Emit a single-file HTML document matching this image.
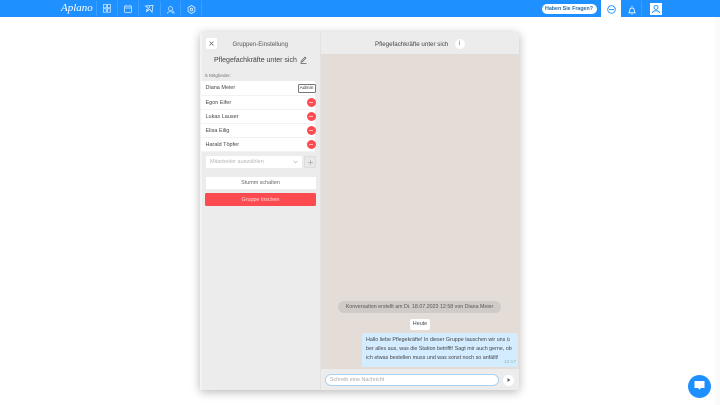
<!DOCTYPE html>
<html><head><meta charset="utf-8"><style>
html,body{margin:0;padding:0;width:720px;height:405px;overflow:hidden;background:#fff;font-family:"Liberation Sans",sans-serif;color:#444}
div{position:absolute;box-sizing:border-box;white-space:nowrap}
svg{position:absolute;overflow:visible}
.sep{top:1px;width:1px;height:15px;background:#3a9fff}
.row{left:201px;width:114px;height:14px;background:#fff;font-size:5.5px;line-height:14.5px;padding-left:4.5px;color:#444;border-bottom:1px solid #f2f2f2}
.minus{left:306.5px;width:9px;height:9px;border-radius:50%;background:#fb4b50}
.minus:after{content:"";position:absolute;left:2.5px;top:4px;width:4px;height:1px;background:#fbb}
</style></head><body>
<div style="left:0;top:0;width:720px;height:17px;background:#1e90ff"></div>
<div style="left:61px;top:1px;color:#fff;font:italic 11px 'Liberation Serif',serif;line-height:15px">Aplano</div>
<div class="sep" style="left:96px"></div><div class="sep" style="left:117px"></div><div class="sep" style="left:138px"></div><div class="sep" style="left:160px"></div><div class="sep" style="left:180px"></div><div class="sep" style="left:201px"></div>
<svg style="left:103px;top:4px" width="8" height="9" fill="none" stroke="#dcefff" stroke-width=".7"><rect x=".4" y=".4" width="3" height="3.4"/><rect x="4.4" y=".4" width="3" height="3.4"/><rect x=".4" y="4.8" width="3" height="3.4"/><rect x="4.4" y="4.8" width="3" height="3.4"/></svg>
<svg style="left:124px;top:5px" width="8" height="8" fill="none" stroke="#dcefff" stroke-width=".7"><rect x=".4" y="1" width="7.2" height="6.4" rx="1"/><path d="M.4 3h7.2M2 0v1.500M6 0v1.500"/></svg>
<svg style="left:145px;top:5px" width="9" height="8" fill="none" stroke="#dcefff" stroke-width=".8"><path d="M.5 1l7.500-.7-1 7-2-3-4 2.500 2.500-3.500zM1 4.500l2 1M4 1l1 2"/></svg>
<svg style="left:167px;top:6px" width="8" height="8" fill="none" stroke="#dcefff" stroke-width=".7"><circle cx="3.500" cy="2.600" r="2"/><path d="M.3 7.500c.5-2.400 5-2.400 5.800 0M5.500 4.500l2 3"/></svg>
<svg style="left:187px;top:5px" width="9" height="9" fill="none" stroke="#dcefff" stroke-width=".8"><path d="M4.500.5l3.400 2v4l-3.400 2-3.400-2v-4z"/><circle cx="4.500" cy="4.500" r="1.300"/></svg>
<div style="left:541.500px;top:4px;width:55px;height:10px;background:#fff;border-radius:5px;color:#2a6ca8;font-size:5.300px;font-weight:bold;line-height:10.500px;text-align:center">Haben Sie Fragen?</div>
<div style="left:601px;top:0;width:20px;height:17px;background:#fff"></div>
<svg style="left:606.500px;top:5px" width="9" height="9" fill="none" stroke="#1e90ff" stroke-width=".9"><circle cx="4.500" cy="4.500" r="3.800"/><path d="M2 4.500h5"/></svg>
<svg style="left:628px;top:5.500px" width="8" height="9" fill="none" stroke="#fff" stroke-width=".8"><path d="M1 6.800c1-1 .7-2.200 1-3.600C2.400 1.500 5.600 1.500 6 3.200c.3 1.400 0 2.600 1 3.600zM3.300 8h1.400M4 0v1"/></svg>
<div class="sep" style="left:641px"></div>
<div style="left:649.500px;top:3px;width:12px;height:12px;background:#fff"></div>
<svg style="left:650.500px;top:4px" width="10" height="10" fill="none" stroke="#1e90ff" stroke-width=".9"><circle cx="5" cy="3.400" r="2"/><path d="M1.500 9c.4-3 6.600-3 7 0"/></svg>
<div style="left:715px;top:17px;width:5px;height:388px;background:#fafafa"></div>

<div style="left:200px;top:32px;width:319px;height:358px;background:#ececec;box-shadow:0 2px 9px rgba(0,0,0,.28)"></div>
<div style="left:200px;top:32px;width:1.500px;height:358px;background:#f3f3f3"></div>
<div style="left:320px;top:54.500px;width:198.500px;height:314.500px;background:#e4dcd6"></div>
<div style="left:320px;top:32px;width:1px;height:358px;background:#e2e2e2"></div>
<div style="left:320px;top:53.500px;width:199px;height:1px;background:#e0dcd9"></div>

<div style="left:206px;top:37.500px;width:11px;height:11px;background:#fff;border-radius:1.500px"></div>
<svg style="left:209px;top:41px" width="5" height="5" stroke="#666" stroke-width=".7"><path d="M.5.500l4 4M4.500.500l-4 4"/></svg>
<div style="left:232.500px;top:40px;font-size:6.100px;line-height:9px;color:#555">Gruppen-Einstellung</div>
<div style="left:214px;top:55.500px;font-size:7px;line-height:10px;color:#444">Pflegefachkräfte unter sich</div>
<svg style="left:300px;top:56px" width="7" height="8" fill="none" stroke="#444" stroke-width=".6"><path d="M1.200 5.200L5 1l1 1L2.200 6l-1.200.3zM.5 7.400h6"/></svg>
<div style="left:205px;top:72.500px;font-size:4.800px;line-height:7px;color:#777">5 Mitglieder:</div>

<div class="row" style="top:81px;height:14.500px;line-height:15px">Diana Meier</div>
<div style="left:297.500px;top:84px;width:18px;height:9px;border:.7px solid #777;border-radius:1.500px;background:#fff;font-size:4.900px;line-height:8.500px;text-align:center;color:#333">Admin</div>
<div class="row" style="top:95.500px">Egon Eifer</div><div class="minus" style="top:97.500px"></div>
<div class="row" style="top:109.500px">Lukas Lauser</div><div class="minus" style="top:111.500px"></div>
<div class="row" style="top:123.500px">Elisa Eilig</div><div class="minus" style="top:125.500px"></div>
<div class="row" style="top:137.500px">Harald Töpfer</div><div class="minus" style="top:139.500px"></div>

<div style="left:205.500px;top:156px;width:96px;height:11.500px;background:#fff;border-radius:1.500px;font-size:5.500px;line-height:13px;padding-left:4.500px;color:#b5b5b5">Mitarbeiter auswählen</div>
<svg style="left:293px;top:160px" width="5" height="4" fill="none" stroke="#bbb" stroke-width=".7"><path d="M.5.800L2.500 3 4.500.800"/></svg>
<div style="left:304px;top:156px;width:11.500px;height:11.500px;background:#e8e8e8;border:.7px solid #ddd;border-radius:1.500px"></div>
<svg style="left:307.500px;top:159.500px" width="5" height="5" stroke="#aaa" stroke-width=".7"><path d="M2.500 0v5M0 2.500h5"/></svg>
<div style="left:205.500px;top:177px;width:110px;height:11.500px;background:#fff;font-size:5.400px;line-height:13.500px;text-align:center;color:#666">Stumm schalten</div>
<div style="left:205px;top:193px;width:111px;height:12.500px;background:#fb4b50;border-radius:1.500px;font-size:5.400px;line-height:14px;text-align:center;color:#ffdede">Gruppe löschen</div>

<div style="left:375px;top:39.500px;font-size:6.200px;line-height:9px;color:#444">Pflegefachkräfte unter sich</div>
<div style="left:454.500px;top:38.500px;width:10px;height:10px;border-radius:50%;background:#fff;font-size:6px;line-height:10px;text-align:center;color:#666">i</div>

<div style="left:338px;top:300.500px;width:163px;height:12.500px;background:#d0cbc7;border-radius:6px;font-size:5.300px;line-height:13px;text-align:center;color:#555">Konversation erstellt am Di. 18.07.2023 12:58 von Diana Meier</div>
<div style="left:410px;top:319px;width:20px;height:10.500px;background:#fff;border-radius:2px;font-size:5.400px;line-height:11px;text-align:center;color:#444">Heute</div>
<div style="left:362px;top:333px;width:155.500px;height:33.500px;background:#d4ecff;border-radius:2px"></div>
<div style="left:366px;top:335.500px;font-size:5.350px;line-height:9px;color:#444">Hallo liebe Pflegekräfte! In dieser Gruppe tauschen wir uns ü<br>ber alles aus, was die Station betrifft! Sagt mir auch gerne, ob<br>ich etwas bestellen muss und was sonst noch so anfällt!</div>
<div style="left:504px;top:360px;font-size:4.800px;line-height:6px;color:#8ba">12:17</div>

<div style="left:325px;top:373.500px;width:173.500px;height:12px;background:#fff;border:.8px solid #a9d2f2;border-radius:6px;font-size:5.400px;line-height:10.400px;padding-left:4px;color:#aaa">Schreib eine Nachricht</div>
<div style="left:503px;top:374.500px;width:11px;height:11px;border-radius:50%;background:#fff"></div>
<svg style="left:507px;top:378px" width="4" height="4" fill="#666"><path d="M.5 0L3.500 2 .5 4z"/></svg>

<div style="left:688px;top:375px;width:23px;height:23px;border-radius:50%;background:#1e8fff"></div>
<svg style="left:694px;top:381px" width="11" height="10" fill="#fff"><path d="M.5 0h10v7H6.800L5.500 8.800 4.200 7H.5z"/></svg>
</body></html>
